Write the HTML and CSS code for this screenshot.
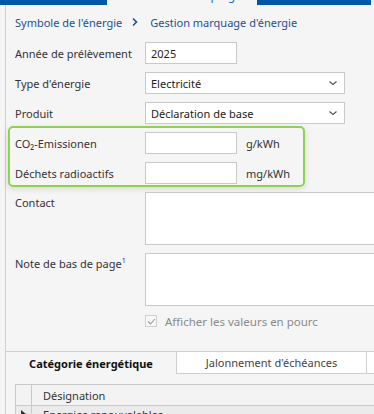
FILE: index.html
```html
<!DOCTYPE html>
<html lang="fr">
<head>
<meta charset="utf-8">
<link rel="stylesheet" href="styles.css">
</head>
<body>
<div class="topbar">
  <div class="seg seg-a"></div>
  <div class="toptab"><span>Gestion marquage d'énergie</span></div>
  <div class="seg seg-b"></div>
  <div class="seg-end"></div>
</div>
<div class="shell">
  <div class="panel">
    <div class="crumbs">
      <span class="crumb">Symbole de l'énergie</span>
      <svg class="chev" width="8" height="10" viewBox="0 0 8 10"><path d="M2 1.5 L5.5 5 L2 8.5" fill="none" stroke="#1f4f8f" stroke-width="1.6"/></svg>
      <span class="crumb">Gestion marquage d'énergie</span>
    </div>
    <div class="row">
      <label class="lbl">Année de prélèvement</label>
      <div class="input short">2025</div>
    </div>
    <div class="row">
      <label class="lbl">Type d'énergie</label>
      <div class="input select"><span>Electricité</span><svg width="10" height="6" viewBox="0 0 10 6"><path d="M1.5 1.5 L5 4.5 L8.5 1.5" fill="none" stroke="#555" stroke-width="1.2"/></svg></div>
    </div>
    <div class="row">
      <label class="lbl">Produit</label>
      <div class="input select"><span>Déclaration de base</span><svg width="10" height="6" viewBox="0 0 10 6"><path d="M1.5 1.5 L5 4.5 L8.5 1.5" fill="none" stroke="#555" stroke-width="1.2"/></svg></div>
    </div>
    <div class="highlight">
      <div class="row">
        <label class="lbl">CO₂-Emissionen</label>
        <div class="input short"></div>
        <span class="unit">g/kWh</span>
      </div>
      <div class="row last">
        <label class="lbl">Déchets radioactifs</label>
        <div class="input short"></div>
        <span class="unit">mg/kWh</span>
      </div>
    </div>
    <div class="row tall">
      <label class="lbl">Contact</label>
      <div class="input area"></div>
    </div>
    <div class="row tall">
      <label class="lbl">Note de bas de page<sup>1</sup></label>
      <div class="input area"></div>
    </div>
    <div class="checkrow">
      <span class="check"><svg width="9" height="7" viewBox="0 0 9 7"><path d="M1 3.5 L3.5 6 L8 1" fill="none" stroke="#9a9a9a" stroke-width="1.1"/></svg></span>
      <span class="checktext">Afficher les valeurs en pourc</span>
    </div>
  </div>
  <div class="tabs">
    <div class="tab active">Catégorie énergétique</div>
    <div class="tab">Jalonnement d'échéances</div>
    <div class="tab rest"></div>
  </div>
  <div class="gridwrap">
    <div class="grid">
      <div class="ghead">
        <div class="rh"></div>
        <div class="cell">Désignation</div>
      </div>
      <div class="grow">
        <div class="rh"><svg width="5" height="8" viewBox="0 0 5 8"><path d="M0 0 L5 4 L0 8 Z" fill="#333"/></svg></div>
        <div class="cell">Energies renouvelables</div>
      </div>
    </div>
  </div>
</div>
</body>
</html>
```
FILE: styles.css
```css
html, body {
  margin: 0;
  padding: 0;
}
body {
  width: 374px;
  height: 414px;
  overflow: hidden;
  background: #f5f5f5;
  font-family: "Noto Sans", "Open Sans", sans-serif;
  font-size: 11px;
  color: #353238;
}
.topbar {
  display: flex;
  height: 5px;
  overflow: hidden;
}
.seg { background: #0057a6; }
.seg-a { width: 107px; }
.seg-b { width: 114px; }
.seg-end { flex: 1; background: #f3f3f3; }
.toptab {
  width: 150px;
  background: #f5f5f5;
  position: relative;
  overflow: hidden;
}
.toptab span {
  position: absolute;
  left: 30px;
  top: -13px;
  color: #1f6fc0;
  white-space: nowrap;
  font-size: 12px;
}
.shell {
  margin-left: 5px;
  border-left: 1px solid #cfcfcf;
  height: 409px;
  width: 400px;
}
.panel {
  padding-left: 9px;
}
.crumbs {
  display: flex;
  align-items: center;
  height: 16px;
  padding-top: 9px;
  margin-bottom: 12px;
  color: #1f4f8f;
  white-space: nowrap;
}
.chev { margin: 0 11px 0 9px; }
.row {
  display: flex;
  align-items: center;
  height: 22px;
  margin-bottom: 8px;
}
.row.last { margin-bottom: 0; }
.lbl {
  width: 130px;
  flex: none;
  white-space: nowrap;
}
.lbl sup {
  font-size: 7px;
  vertical-align: 5px;
  line-height: 0;
}
.input {
  box-sizing: border-box;
  height: 22px;
  background: #fff;
  border: 1px solid #c9c9c9;
  padding: 0 5px;
  display: flex;
  align-items: center;
  color: #222;
  white-space: nowrap;
  flex: none;
}
.input.short { width: 92px; }
.input.select {
  width: 200px;
  justify-content: space-between;
  padding-right: 6px;
}
.unit { margin-left: 9px; }
.highlight {
  margin-left: -7px;
  margin-top: -6px;
  width: 297px;
  box-sizing: border-box;
  border: 2px solid #8ed34f;
  border-radius: 5px;
  padding: 4px 0 1px 5px;
  margin-bottom: 5px;
  box-shadow: 0 2px 6px rgba(0, 0, 0, 0.12);
}
.row.tall {
  height: 53px;
  align-items: flex-start;
}
.row.tall .lbl { padding-top: 3px; }
.input.area {
  width: 260px;
  height: 53px;
}
.checkrow {
  display: flex;
  align-items: center;
  padding-left: 130px;
  height: 14px;
  margin-top: 3px;
}
.check {
  box-sizing: border-box;
  width: 12px;
  height: 12px;
  border: 1px solid #d0d0d0;
  background: #f7f7f7;
  display: flex;
  align-items: center;
  justify-content: center;
}
.checktext {
  margin-left: 8px;
  color: #8a8a8a;
  font-size: 11.5px;
}
.tabs {
  display: flex;
  margin-top: 23px;
  border-top: 1px solid #cfcfcf;
  height: 22px;
}
.tab {
  box-sizing: border-box;
  height: 22px;
  display: flex;
  align-items: center;
  justify-content: center;
  white-space: nowrap;
}
.tab.active {
  width: 170px;
  font-weight: bold;
  color: #111;
}
.tab:not(.active) {
  background: #fff;
  border-bottom: 1px solid #cfcfcf;
  border-left: 1px solid #cfcfcf;
  width: 190px;
  color: #444;
}
.tab.rest { width: 40px; }
.gridwrap {
  padding: 10px 0 0 9px;
}
.grid {
  border-top: 1px solid #c9c9c9;
  border-left: 1px solid #c9c9c9;
  width: 380px;
}
.ghead, .grow {
  display: flex;
  height: 20px;
}
.ghead {
  border-bottom: 1px solid #c9c9c9;
  background: #f3f3f3;
}
.grow { background: #ebebeb; }
.rh {
  width: 15px;
  border-right: 1px solid #c9c9c9;
  display: flex;
  align-items: center;
  justify-content: center;
}
.grow .rh { align-items: flex-start; padding-top: 4px; }
.cell {
  padding-left: 11px;
  display: flex;
  align-items: center;
  color: #333;
}
.grow .cell { align-items: flex-start; padding-top: 1px; }
```
